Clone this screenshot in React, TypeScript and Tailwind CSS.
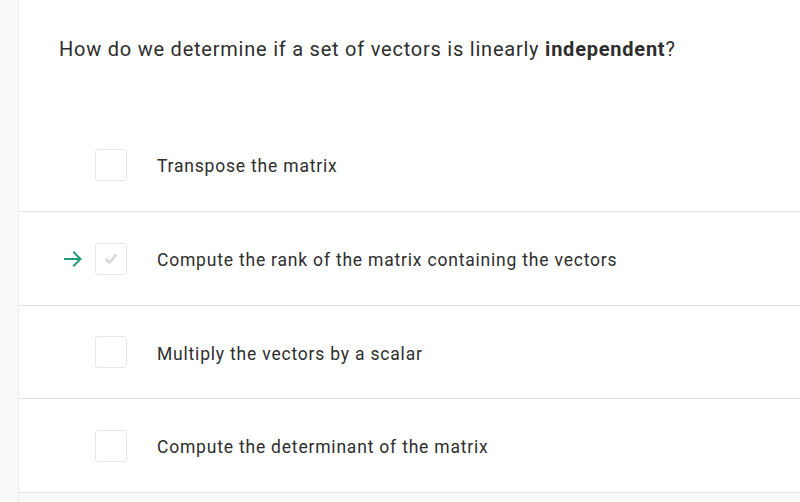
import React from "react";

const options = [
  { text: "Transpose the matrix", checked: false, arrow: false, h: "h-[94px]" },
  { text: "Compute the rank of the matrix containing the vectors", checked: true, arrow: true, h: "h-[94px]" },
  { text: "Multiply the vectors by a scalar", checked: false, arrow: false, h: "h-[93px]" },
  { text: "Compute the determinant of the matrix", checked: false, arrow: false, h: "h-[94px]" },
];

export default function App() {
  return (
    <div className="flex w-[800px] h-[502px] overflow-hidden bg-[#f9f9f9]" style={{ fontFamily: "Roboto, 'Noto Sans', sans-serif" }}>
      <div className="w-[19px] shrink-0 bg-[#f9f9f9] border-r border-[#ededed]" />
      <div className="flex-1 flex flex-col">
        <div className="bg-white">
          <h1 className="pl-[40px] pt-[35px] h-[118px] text-[20px] leading-[28px] tracking-[0.77px] text-[#2e2e2e] font-normal">
            How do we determine if a set of vectors is linearly <b className="font-bold">independent</b>?
          </h1>
          {options.map((o, i) => (
            <div key={i} className={`flex items-center ${o.h} border-b border-[#e3e3e3]`}>
              <div className="w-[76px] shrink-0 flex justify-end pr-[12px]">
                {o.arrow && (
                  <svg width="20" height="20" viewBox="0 0 20 20" fill="none" stroke="#1c9c78" strokeWidth="2" strokeLinecap="square">
                    <path d="M2 10 H17" />
                    <path d="M11 3.5 L17.5 10 L11 16.5" />
                  </svg>
                )}
              </div>
              <div className="w-[32px] h-[32px] shrink-0 rounded-[3px] border border-[#e6e6e6] bg-white flex items-center justify-center">
                {o.checked && (
                  <svg width="16" height="16" viewBox="0 0 16 16" fill="none" stroke="#d8d8da" strokeWidth="2.6" strokeLinecap="round" strokeLinejoin="round">
                    <path d="M3.5 8.5 L6.5 11.5 L12.5 4.5" />
                  </svg>
                )}
              </div>
              <span className="pl-[30px] pt-[4px] text-[17.5px] tracking-[0.8px] text-[#2e2e2e]">{o.text}</span>
            </div>
          ))}
        </div>
        <div className="flex-1 bg-[#f9f9f9]" />
      </div>
    </div>
  );
}
